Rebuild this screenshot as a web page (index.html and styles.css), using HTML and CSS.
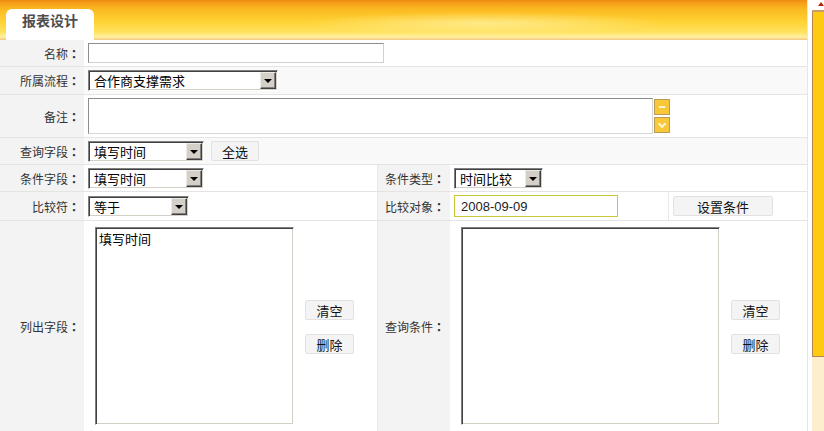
FILE: index.html
```html
<!DOCTYPE html>
<html lang="zh-CN">
<head>
<meta charset="utf-8">
<title>报表设计</title>
<link rel="stylesheet" href="styles.css">
</head>
<body>
<div class="page">
  <div class="header">
    <div class="tab">报表设计</div>
  </div>
  <div class="form">
    <div class="row r1 wide">
      <div class="label">名称<span class="colon">：</span></div>
      <div class="value"><div class="input name"></div></div>
    </div>
    <div class="row r2 wide">
      <div class="label">所属流程<span class="colon">：</span></div>
      <div class="value">
        <div class="select w-flow"><span class="sel-text">合作商支撑需求</span><span class="sel-btn"></span></div>
      </div>
    </div>
    <div class="row r3 wide">
      <div class="label">备注<span class="colon">：</span></div>
      <div class="value">
        <div class="textarea"></div>
        <div class="spin">
          <span class="spin-btn"><span class="dash"></span></span>
          <span class="spin-btn"><span class="chev"></span></span>
        </div>
      </div>
    </div>
    <div class="row r4 wide">
      <div class="label">查询字段<span class="colon">：</span></div>
      <div class="value">
        <div class="select w-field"><span class="sel-text">填写时间</span><span class="sel-btn"></span></div>
        <div class="btn b-all">全选</div>
      </div>
    </div>
    <div class="row r5 quad">
      <div class="label">条件字段<span class="colon">：</span></div>
      <div class="value">
        <div class="select w-field"><span class="sel-text">填写时间</span><span class="sel-btn"></span></div>
      </div>
      <div class="label label2">条件类型<span class="colon">：</span></div>
      <div class="value">
        <div class="select w-type"><span class="sel-text">时间比较</span><span class="sel-btn"></span></div>
      </div>
    </div>
    <div class="row r6 quad">
      <div class="label">比较符<span class="colon">：</span></div>
      <div class="value">
        <div class="select w-op"><span class="sel-text">等于</span><span class="sel-btn"></span></div>
      </div>
      <div class="label label2">比较对象<span class="colon">：</span></div>
      <div class="value split">
        <div class="sub"><div class="date">2008-09-09</div></div>
        <div class="sub sub-btn"><div class="btn b-set">设置条件</div></div>
      </div>
    </div>
    <div class="row r7 quad">
      <div class="label">列出字段<span class="colon">：</span></div>
      <div class="value">
        <div class="list l-left"><div class="item">填写时间</div></div>
        <div class="btns">
          <div class="btn b-small">清空</div>
          <div class="btn b-small">删除</div>
        </div>
      </div>
      <div class="label label2">查询条件<span class="colon">：</span></div>
      <div class="value">
        <div class="list l-right"></div>
        <div class="btns">
          <div class="btn b-small">清空</div>
          <div class="btn b-small">删除</div>
        </div>
      </div>
    </div>
  </div>
</div>
<div class="scroll">
  <div class="scroll-in">
    <div class="arrow-up"><span class="tri"></span></div>
    <div class="thumb"></div>
    <div class="track"></div>
  </div>
</div>
</body>
</html>
```
FILE: styles.css
```css
html, body {
  margin: 0;
  padding: 0;
}
body {
  width: 824px;
  height: 431px;
  overflow: hidden;
  display: flex;
  background: #fff;
  font-family: "Noto Sans CJK SC", "Liberation Sans", sans-serif;
  font-size: 12px;
  color: #333;
}
.page {
  width: 807px;
  flex: none;
  border-right: 1px solid #e3e8ee;
  display: flex;
  flex-direction: column;
}
.header {
  height: 40px;
  flex: none;
  box-sizing: border-box;
  padding: 9px 0 0 6px;
  background:
    radial-gradient(ellipse 260px 16px at 60% 58%, rgba(255, 248, 190, 0.6), rgba(255, 248, 190, 0) 70%),
    linear-gradient(to bottom, #ef8a0e 0, #f5a01a 3px, #fbbb22 10px, #ffd334 22px, #ffe260 32px, #fff0a0 37px, #f7d690 39px, #f2c27c 40px);
}
.tab {
  width: 88px;
  height: 31px;
  background: #fff;
  border-radius: 6px 6px 0 0;
  font-size: 14px;
  font-weight: bold;
  color: #4d4d4d;
  text-align: center;
  line-height: 23px;
}
.form {
  flex: 1;
  display: flex;
  flex-direction: column;
}
.row {
  display: grid;
  border-bottom: 1px solid #e4e4e4;
  box-sizing: border-box;
}
.wide { grid-template-columns: 84px 1fr; }
.quad { grid-template-columns: 84px 293px 73px 1fr; }
.r1 { height: 27px; }
.r2 { height: 28px; }
.r3 { height: 43px; }
.r4 { height: 27px; }
.r5 { height: 27px; }
.r6 { height: 29px; }
.r7 { flex: 1; border-bottom: none; }
.label {
  background: #f3f3f3;
  display: flex;
  align-items: center;
  justify-content: flex-end;
  padding-right: 4px;
  color: #333;
}
.colon {
  font-family: "Noto Sans CJK TC", "Noto Sans CJK SC", sans-serif;
  font-weight: bold;
}
.label2 {
  justify-content: flex-start;
  padding-left: 7px;
  padding-right: 0;
  border-left: 1px solid #e8e8e8;
}
.value {
  display: flex;
  align-items: center;
  padding-left: 4px;
  background: #fff;
}
.r2 .value, .r4 .value { background: #f9f9f9; }
.input {
  box-sizing: border-box;
  background: #fff;
  border: 1px solid;
  border-color: #8d8d8d #d0d0d0 #d0d0d0 #8d8d8d;
}
.name { width: 296px; height: 20px; }
.select {
  box-sizing: border-box;
  height: 21px;
  display: flex;
  background: #fff;
  border: 1px solid;
  border-color: #808080 #fff #fff #808080;
  box-shadow: inset 1px 1px 0 #404040, inset -1px -1px 0 #d4d0c8;
  padding: 1px;
  font-size: 13px;
  color: #000;
}
.sel-text {
  flex: 1;
  line-height: 17px;
  padding-left: 4px;
  white-space: nowrap;
}
.sel-btn {
  width: 16px;
  height: 17px;
  box-sizing: border-box;
  background: #d4d0c8;
  border: 1px solid;
  border-color: #ecebe6 #404040 #404040 #ecebe6;
  box-shadow: inset -1px -1px 0 #808080;
  position: relative;
}
.sel-btn::after {
  content: "";
  position: absolute;
  left: 3px;
  top: 6px;
  border-left: 4px solid transparent;
  border-right: 4px solid transparent;
  border-top: 4px solid #000;
}
.w-flow { width: 190px; }
.w-field { width: 116px; }
.w-type { width: 89px; }
.w-op { width: 101px; }
.textarea {
  box-sizing: border-box;
  width: 565px;
  height: 36px;
  background: #fff;
  border: 1px solid;
  border-color: #8d8d8d #d6d6d6 #d6d6d6 #8d8d8d;
}
.spin {
  display: flex;
  flex-direction: column;
  gap: 2px;
  margin-left: 1px;
}
.spin-btn {
  width: 16px;
  height: 16px;
  box-sizing: border-box;
  background: #f9c838;
  border: 1px solid #b99a56;
  display: flex;
  align-items: center;
  justify-content: center;
}
.dash {
  width: 6px;
  height: 2px;
  background: #fff6d8;
}
.chev {
  width: 4px;
  height: 4px;
  border-right: 2px solid #fff4d0;
  border-bottom: 2px solid #fff4d0;
  transform: rotate(45deg);
  margin-top: -2px;
}
.btn {
  box-sizing: border-box;
  height: 20px;
  background: #f4f4f4;
  border: 1px solid #e1e1e1;
  border-radius: 2px;
  display: flex;
  align-items: center;
  justify-content: center;
  font-size: 13px;
  color: #111;
}
.b-all { width: 48px; margin-left: 7px; }
.b-set { width: 100px; }
.b-small { width: 49px; }
.split { padding-left: 0; }
.sub {
  display: flex;
  align-items: center;
  height: 100%;
  padding-left: 4px;
  width: 214px;
}
.sub-btn {
  width: auto;
  flex: 1;
  border-left: 1px solid #e8e8e8;
  padding-left: 4px;
}
.date {
  box-sizing: border-box;
  width: 164px;
  height: 22px;
  border: 1px solid #c9c838;
  background: #fff;
  font-family: "Liberation Sans", Arial, sans-serif;
  font-size: 13px;
  color: #222;
  padding: 4px 0 0 6px;
  line-height: 14px;
}
.r7 .value {
  padding-left: 11px;
  align-items: flex-start;
  padding-top: 6px;
  gap: 11px;
}
.list {
  box-sizing: border-box;
  height: 198px;
  background: #fff;
  border: 1px solid;
  border-color: #808080 #fff #fff #808080;
  box-shadow: inset 1px 1px 0 #404040, inset -1px -1px 0 #d4d0c8;
  padding: 2px 3px;
  font-size: 13px;
  color: #000;
}
.item { line-height: 18px; }
.l-left { width: 199px; }
.l-right { width: 259px; }
.btns {
  display: flex;
  flex-direction: column;
  gap: 14px;
  margin-top: 73px;
}
.scroll {
  width: 16px;
  flex: none;
  background: #fff;
  padding-left: 4px;
  box-sizing: border-box;
}
.scroll-in {
  height: 100%;
  display: flex;
  flex-direction: column;
  background: #fdefcd;
}
.arrow-up {
  height: 10px;
  background: #fff;
  border-bottom: 2px solid #c99a6a;
  position: relative;
}
.tri {
  position: absolute;
  left: 6px;
  top: 2px;
  border-left: 3px solid transparent;
  border-right: 3px solid transparent;
  border-bottom: 4px solid #c0200c;
}
.thumb {
  height: 344px;
  background: #fecb12;
  border-left: 1px solid #b58552;
  border-bottom: 1px solid #b58552;
}
.track { flex: 1; }
```
